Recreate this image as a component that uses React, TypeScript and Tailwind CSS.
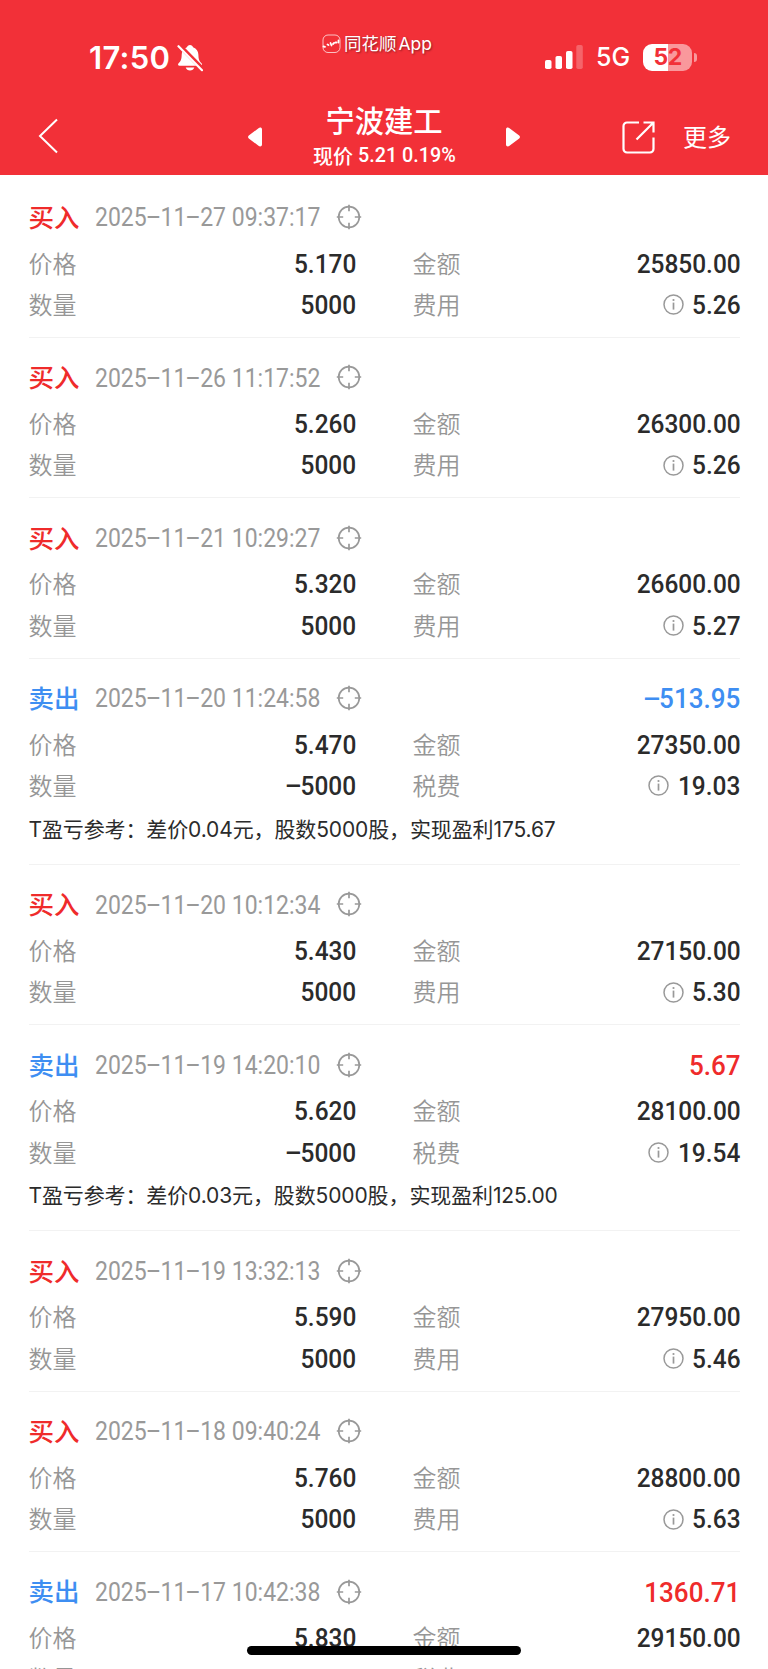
import React from "react";

type Trade = {
  side: "buy" | "sell";
  time: string;
  price: string;
  qty: string;
  amount: string;
  fee: string;
  profit?: string;
  note?: string;
};

const TRADES: Trade[] = [
  { side: "buy", time: "2025-11-27 09:37:17", price: "5.170", qty: "5000", amount: "25850.00", fee: "5.26" },
  { side: "buy", time: "2025-11-26 11:17:52", price: "5.260", qty: "5000", amount: "26300.00", fee: "5.26" },
  { side: "buy", time: "2025-11-21 10:29:27", price: "5.320", qty: "5000", amount: "26600.00", fee: "5.27" },
  {
    side: "sell",
    time: "2025-11-20 11:24:58",
    price: "5.470",
    qty: "-5000",
    amount: "27350.00",
    fee: "19.03",
    profit: "-513.95",
    note: "T盈亏参考：差价0.04元，股数5000股，实现盈利175.67",
  },
  { side: "buy", time: "2025-11-20 10:12:34", price: "5.430", qty: "5000", amount: "27150.00", fee: "5.30" },
  {
    side: "sell",
    time: "2025-11-19 14:20:10",
    price: "5.620",
    qty: "-5000",
    amount: "28100.00",
    fee: "19.54",
    profit: "5.67",
    note: "T盈亏参考：差价0.03元，股数5000股，实现盈利125.00",
  },
  { side: "buy", time: "2025-11-19 13:32:13", price: "5.590", qty: "5000", amount: "27950.00", fee: "5.46" },
  { side: "buy", time: "2025-11-18 09:40:24", price: "5.760", qty: "5000", amount: "28800.00", fee: "5.63" },
  { side: "sell", time: "2025-11-17 10:42:38", price: "5.830", qty: "-5000", amount: "29150.00", fee: "20.05", profit: "1360.71" },
];

// Hyphens are widened so they take about one digit's width.
function Digits({ text }: { text: string }) {
  return (
    <>
      {text.split(/(-)/).map((part, i) =>
        part === "-" ? (
          <span key={i} className="inline-block w-[15px] -translate-y-[1.5px] scale-x-[2.1] text-center">
            -
          </span>
        ) : (
          part
        ),
      )}
    </>
  );
}

function TargetIcon() {
  return (
    <svg className="mt-px" width="26" height="26" viewBox="0 0 26 26" fill="none" stroke="#999" strokeWidth="1.7">
      <circle cx="13" cy="13" r="10.3" />
      <path d="M13 .8v6.4M13 18.8v6.4M.8 13h6.4M18.8 13h6.4" />
    </svg>
  );
}

function InfoIcon() {
  return (
    <svg width="21" height="21" viewBox="0 0 21 21" fill="none" stroke="#999" strokeWidth="1.5">
      <circle cx="10.5" cy="10.5" r="9.5" />
      <path d="M10.5 8.6v7" strokeWidth="1.7" />
      <circle cx="10.5" cy="6" r="1.1" fill="#999" stroke="none" />
    </svg>
  );
}

function Field({ label, value, info }: { label: string; value: string; info?: boolean }) {
  return (
    <div className="flex h-[41.3px] items-center justify-between">
      <span className="mb-[2px] text-[24px] font-[350] text-[#969696]">{label}</span>
      <span className="flex items-center">
        {info && <InfoIcon />}
        <span className="mt-px -mr-px ml-[5px] inline-block origin-right scale-x-[0.94] font-['Roboto'] text-[26px] font-medium text-[#2b2b2b]">
          <Digits text={value} />
        </span>
      </span>
    </div>
  );
}

function TradeItem({ trade }: { trade: Trade }) {
  const sell = trade.side === "sell";
  return (
    <li className="shrink-0 border-b border-[#f2f2f2] pt-[12.6px] pb-[11.4px]">
      <div className="flex h-[52.8px] items-center">
        <span className={`w-[66px] pb-px text-[25.5px] font-medium ${sell ? "text-[#3e8ef2]" : "text-[#ef2b2b]"}`}>
          {sell ? "卖出" : "买入"}
        </span>
        <span className="mt-[3px] w-[241px]">
          <span className="inline-block origin-left scale-x-[0.92] font-['Roboto'] text-[25px] whitespace-nowrap text-[#999]">
            <Digits text={trade.time} />
          </span>
        </span>
        <TargetIcon />
        {trade.profit && (
          <span
            className={`mt-[3px] -mr-px ml-auto inline-block origin-right scale-x-[0.93] font-['Roboto'] text-[28px] font-medium ${
              trade.profit.startsWith("-") ? "text-[#3e8ef2]" : "text-[#ef2b2b]"
            }`}
          >
            <Digits text={trade.profit} />
          </span>
        )}
      </div>
      <div className="grid grid-cols-2 gap-x-[57px]">
        <Field label="价格" value={trade.price} />
        <Field label="金额" value={trade.amount} />
        <Field label="数量" value={trade.qty} />
        <Field label={sell ? "税费" : "费用"} value={trade.fee} info />
      </div>
      {trade.note && (
        <p className="flex h-[45.8px] items-center font-['Inter','Noto_Sans_CJK_SC',sans-serif] text-[21px] font-[370] tracking-[-0.12px] whitespace-nowrap text-[#2b2b2b]">
          {trade.note}
        </p>
      )}
    </li>
  );
}

function StatusBar() {
  return (
    <div className="grid h-[90px] grid-cols-3 text-white">
      <div className="flex items-center gap-[7px] pt-[26px] pl-[89px]">
        <span className="font-['Inter'] text-[31px] font-semibold tracking-[0.3px]">17:50</span>
        <svg width="26" height="28" viewBox="0 0 26 28">
          <path
            d="M13 1c1.6 0 2.8 1 3.1 2.3 3.5 1.3 5.2 4.2 5.3 7.5.1 4.6 1 6.6 3.1 8.4 1 .9.6 2.6-1 2.6H2.600c-1.600 0-2-1.700-1-2.600 2.100-1.800 3-3.800 3.100-8.400.1-3.300 1.800-6.200 5.200-7.500C10.200 2 11.400 1 13 1zM8.700 23.500h8.600c-.6 1.900-2.300 3-4.300 3s-3.700-1.100-4.300-3z"
            fill="#fff"
          />
          <path d="M1 0l25 25.500" stroke="#f23038" strokeWidth="4.500" />
          <path d="M1.500 2.200l23.500 24" stroke="#fff" strokeWidth="2.200" strokeLinecap="round" />
        </svg>
      </div>
      <div className="flex items-center pb-[2px] pl-[66px]">
        <svg className="mr-[3px]" width="19" height="20" viewBox="0 0 19 20" fill="none" stroke="#fff">
          <rect x="1" y="1" width="17" height="17.500" rx="5" strokeOpacity=".7" />
          <path d="M1.500 12.500l1.500.300M5.500 10.500l1 .5M8.500 9l1 2.500M11 10l1-1M13.500 8.500h1M16.500 6.500v2" strokeWidth="1.800" strokeLinecap="round" />
        </svg>
        <span className="text-[17.500px] [text-shadow:1px_1px_2px_#0006]">
          同花顺<span className="ml-[2px] font-['Inter']">App</span>
        </span>
      </div>
      <div className="flex items-center pt-[24px] pl-[33px]">
        <svg width="38" height="25" viewBox="0 0 38 25" fill="#fff">
          <rect x="0" y="15" width="6.500" height="9" rx="1.800" />
          <rect x="10.500" y="11" width="6.500" height="13" rx="1.800" />
          <rect x="21" y="6" width="6.500" height="18" rx="1.800" />
          <rect x="31.300" y="0" width="6.500" height="24" rx="1.800" fillOpacity=".25" />
        </svg>
        <span className="mt-[2px] ml-[13px] font-['Inter'] text-[25px] font-medium">5G</span>
        <div className="ml-[13px] flex h-[27px] w-[49px] items-center justify-center rounded-[9px] bg-[linear-gradient(90deg,#fff_52%,#f9989c_52%)]">
          <span className="font-['Inter'] text-[23px] font-bold tracking-[-0.5px] text-[#f23038]">52</span>
        </div>
        <div className="ml-[2px] h-[9px] w-[3px] rounded-r-full bg-white/50" />
      </div>
    </div>
  );
}

function NavBar() {
  return (
    <div className="flex h-[85px] items-center text-white">
      <svg className="mt-[7px] ml-[38px]" width="21" height="36" viewBox="0 0 21 36" fill="none" stroke="#fff" strokeWidth="2">
        <path d="M19 1.500L2 18l17 16.500" />
      </svg>
      <svg className="mt-[9px] ml-[189px]" width="14" height="20" viewBox="0 0 14 20" fill="#fff">
        <path d="M14 2.500v15c0 2-2 2.500-3.500 1.300L.8 11.400c-1-.8-1-2 0-2.800l9.700-7.400C12 0 14 .5 14 2.500z" />
      </svg>
      <div className="flex w-[244px] flex-col items-center pt-[4px]">
        <h1 className="h-[36px] text-[29.300px] leading-[36px] font-medium">宁波建工</h1>
        <p className="flex h-[32px] items-center pt-[6px] text-[20px] font-medium whitespace-nowrap">
          现价
          <span className="mt-px -mr-[7px] ml-[5px] inline-block origin-left scale-x-[0.94] font-['Roboto'] text-[21px]">5.21 0.19%</span>
        </p>
      </div>
      <svg className="mt-[9px]" width="14" height="20" viewBox="0 0 14 20" fill="#fff">
        <path d="M0 2.500v15c0 2 2 2.500 3.500 1.300l9.700-7.400c1-.8 1-2 0-2.800L3.500 1.200C2 0 0 .5 0 2.500z" />
      </svg>
      <svg className="mt-[9px] ml-[102px]" width="33" height="33" viewBox="0 0 33 33" fill="none" stroke="#fff" strokeWidth="2.200">
        <path d="M17 1.500H5a3.500 3.500 0 0 0-3.500 3.500v23A3.500 3.500 0 0 0 5 31.500h23a3.500 3.500 0 0 0 3.500-3.500V16.500" />
        <path d="M21.500 1.500h10v10M31 2L14.500 18.500" />
      </svg>
      <span className="mt-[7px] ml-[28px] text-[24px]">更多</span>
    </div>
  );
}

export default function App() {
  return (
    <div className="relative flex h-[1669px] w-[768px] flex-col overflow-hidden bg-white font-['Noto_Sans_CJK_SC',sans-serif]">
      <header className="shrink-0 bg-[#f23038]">
        <StatusBar />
        <NavBar />
      </header>
      <ul className="flex flex-col px-[28.500px] pt-[2.500px]">
        {TRADES.map((trade) => (
          <TradeItem key={trade.time} trade={trade} />
        ))}
      </ul>
      <div className="absolute bottom-[14px] left-[247px] h-[9px] w-[274px] rounded-full bg-black" />
    </div>
  );
}
